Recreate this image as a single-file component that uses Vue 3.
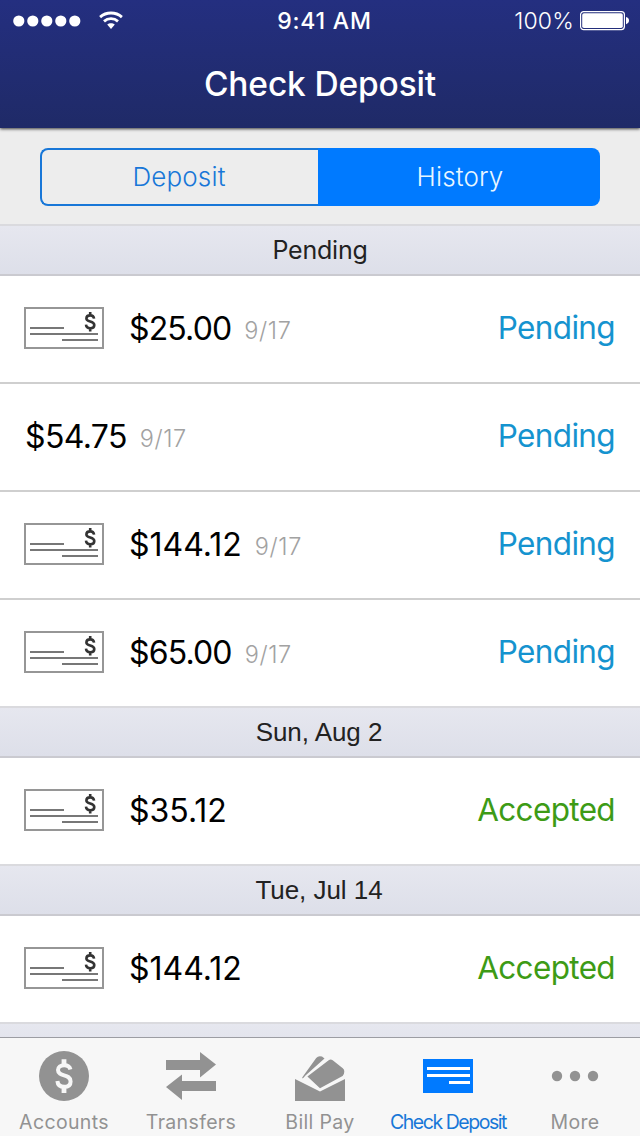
<script setup>
const sections = [
  {
    title: 'Pending',
    rows: [
      { check: true, amount: '$25.00', date: '9/17', status: 'Pending', snug: true },
      { check: false, amount: '$54.75', date: '9/17', status: 'Pending', snug: true },
      { check: true, amount: '$144.12', date: '9/17', status: 'Pending' },
      { check: true, amount: '$65.00', date: '9/17', status: 'Pending', snug: true },
    ],
  },
  { title: 'Sun, Aug 2', dated: true, rows: [{ check: true, amount: '$35.12', status: 'Accepted' }] },
  { title: 'Tue, Jul 14', dated: true, rows: [{ check: true, amount: '$144.12', status: 'Accepted' }] },
  { title: '', rows: [] },
]
</script>

<template>
  <div class="screen">
    <header class="top">
      <div class="status">
        <div class="signal">
          <svg class="dots" width="68" height="12" viewBox="0 0 68 12" fill="#fff">
            <circle v-for="n in 5" :key="n" :cx="n * 14 - 8.2" cy="6" r="5.6" />
          </svg>
          <svg width="24" height="19" viewBox="0 0 24 19" fill="none" stroke="#fff" stroke-width="2.8">
            <path d="M1.1 6.1C7.2 .6 16.8 .6 22.9 6.1" />
            <path d="M5 10.4C9 6.8 15 6.8 19 10.4" />
            <path d="M8.2 13.6C10.4 11.7 13.6 11.7 15.8 13.6L12 17.9Z" fill="#fff" stroke="none" />
          </svg>
        </div>
        <div class="time">9:41 AM</div>
        <div class="power">
          <span class="percent">100%</span>
          <svg width="50" height="20" viewBox="0 0 50 20" fill="#fff">
            <rect x=".6" y=".6" width="43.8" height="18" rx="3" fill="none" stroke="#fff" stroke-width="1.2" />
            <rect x="2.2" y="2.2" width="40.6" height="14.8" rx="1.8" />
            <path d="M46 6q3 .8 3 3.6t-3 3.6z" />
          </svg>
        </div>
      </div>
      <h1>Check Deposit</h1>
    </header>

    <div class="switcher">
      <div class="segments">
        <div class="segment"><span>Deposit</span></div>
        <div class="segment active"><span>History</span></div>
      </div>
    </div>

    <main>
      <section v-for="(s, i) in sections" :key="i">
        <h2 :class="{ dated: s.dated }"><span>{{ s.title }}</span></h2>
        <div v-for="(r, j) in s.rows" :key="j" class="row">
          <svg v-if="r.check" class="check" width="80" height="42" viewBox="0 0 80 42" fill="none">
            <rect x="1" y="1" width="78" height="40" stroke="#969696" stroke-width="2" />
            <path d="M6 21H40M6 27H74M38 33H74" stroke="#777" stroke-width="2" />
            <path d="M70.1 11.6C69.7 9.2 68.3 8.4 66.2 8.4C63.8 8.4 62.4 9.5 62.4 11.4C62.4 15.6 70.3 13.4 70.3 18C70.3 20.2 68.8 21.2 66.3 21.2C63.7 21.2 62.2 20 62 17.6M66.2 5V8.4M66.2 21.2V24.5" stroke="#333" stroke-width="2.6" />
          </svg>
          <span class="amount" :class="{ snug: r.snug, flush: !r.check }">{{ r.amount }}</span>
          <span v-if="r.date" class="date">{{ r.date }}</span>
          <span class="state" :class="r.status.toLowerCase()">{{ r.status }}</span>
        </div>
      </section>
    </main>

    <nav>
      <div class="tab accounts">
        <svg width="50" height="50" viewBox="0 0 50 50" fill="none">
          <circle cx="25" cy="25" r="25" fill="#929292" />
          <path d="M31.4 18.5C30.8 15.6 28.7 14.2 25.2 14.2C21.4 14.2 19 16 19 19C19 26.2 31.6 22.5 31.6 30.4C31.6 33.8 29.2 35.8 25.2 35.8C21.2 35.8 18.7 33.7 18.4 30" stroke="#f7f7f7" stroke-width="4" />
          <path d="M25 8.3V14M25 36V42" stroke="#f7f7f7" stroke-width="4.8" />
        </svg>
        <span>Accounts</span>
      </div>
      <div class="tab transfers">
        <svg width="50" height="50" viewBox="0 0 50 50" fill="#929292">
          <path d="M0 9H34V1L50 13.5L34 26.5V19H0Z" />
          <path d="M50 30H16V23.5L0 36L16 49V40H50Z" />
        </svg>
        <span>Transfers</span>
      </div>
      <div class="tab bills">
        <svg width="50" height="50" viewBox="0 0 50 50" fill="#929292">
          <path d="M0 28L25 40.5L50 28V50H0Z" />
          <path d="M12.4 25.4L33.7 9.2Q35.7 7.7 37.7 9.3L47.8 17.2Q49.5 18.6 49.3 20.8Q49.2 23.7 47.6 25L25 37.2Z" />
          <path d="M7.2 26.4L21.2 7Q23.5 4.2 27 5.6L29.5 7.6L10.2 24.8Q8.7 26.8 7.5 27.6Z" />
        </svg>
        <span>Bill Pay</span>
      </div>
      <div class="tab deposit">
        <svg width="50" height="50" viewBox="0 0 50 50">
          <rect y="8" width="50" height="34" fill="#007aff" />
          <path d="M4 17.4H47M4 24.4H47M26 31.4H47" stroke="#fff" stroke-width="3" />
        </svg>
        <span>Check Deposit</span>
      </div>
      <div class="tab more">
        <svg width="50" height="50" viewBox="0 0 50 50" fill="#929292">
          <circle cx="7" cy="25" r="5.2" /><circle cx="25" cy="25" r="5.2" /><circle cx="43" cy="25" r="5.2" />
        </svg>
        <span>More</span>
      </div>
    </nav>
  </div>
</template>

<style>
body { margin: 0; background: #fff; }
</style>

<style scoped>
* { box-sizing: border-box; }
.screen {
  width: 640px;
  height: 1136px;
  display: flex;
  flex-direction: column;
  overflow: hidden;
  background: #fff;
  font-family: Inter, "Liberation Sans", sans-serif;
  white-space: nowrap;
}
svg { display: block; flex: none; }
.top {
  flex: none;
  position: relative;
  height: 128px;
  color: #fff;
  background: linear-gradient(#242f80, #1f2a67);
  box-shadow: 0 1px 3px rgba(0, 0, 0, .75);
}
.status {
  display: grid;
  grid-template-columns: 1fr auto 1fr;
  height: 41px;
  align-items: center;
  padding: 0 10px 0 13px;
  font-size: 23px;
}
.signal { display: flex; align-items: center; gap: 18px; }
.time { font-weight: 500; letter-spacing: .8px; padding-left: 6px; }
.power { display: flex; justify-content: flex-end; align-items: center; gap: 6px; }
.percent { font-weight: 300; letter-spacing: .2px; }
h1 {
  margin: 0;
  line-height: 87px;
  text-align: center;
  font-size: 33.5px;
  font-weight: 500;
  letter-spacing: -.15px;
}
.switcher { flex: none; height: 96px; padding: 20px 40px; background: #ededed; }
.segments { height: 58px; display: grid; grid-template-columns: 278px 1fr; }
.segment {
  display: grid;
  place-items: center;
  border: 2px solid #1877d8;
  border-right: 0;
  border-radius: 8px 0 0 8px;
  font-size: 26px;
  font-weight: 350;
  line-height: 30px;
  padding: 0 2px 1px 0;
  color: #1877d8;
}
.segment span { letter-spacing: .15px; }
.segment.active {
  background: #007aff;
  border: 0;
  border-radius: 0 8px 8px 0;
  color: #e9f6ff;
  padding: 0 0 1px 2px;
}
main { flex: 1; min-height: 0; overflow: hidden; }
h2 {
  margin: 0;
  height: 52px;
  line-height: 48px;
  text-align: center;
  font-size: 25px;
  font-weight: 400;
  letter-spacing: -.2px;
  color: #222;
  background: linear-gradient(#e6e7ef, #dddfe9);
  border-top: 2px solid #dadade;
  border-bottom: 2px solid #cacad0;
}
h2.dated {
  font-family: "Liberation Sans", Arial, sans-serif;
  font-size: 26px;
  letter-spacing: -.05px;
  padding-right: 2px;
}
.row {
  height: 108px;
  padding: 0 25px 2px 24px;
  display: flex;
  align-items: center;
  border-bottom: 2px solid #cfcfcf;
}
.row:last-child { height: 106px; padding-bottom: 2px; border-bottom: 0; }
.check { margin-right: 25px; }
.amount { font-size: 32px; color: #000; }
.amount.snug { letter-spacing: -.85px; }
.amount.flush { margin-left: 1px; letter-spacing: -.65px; }
.date { margin: 5px 0 0 13px; font-size: 23.5px; font-weight: 325; letter-spacing: .6px; color: #a2a2a2; }
.state { margin: 0 0 1px auto; font-size: 31.5px; letter-spacing: -.65px; }
.pending { color: #1593cf; }
.accepted { color: #3d9b16; }
nav {
  flex: none;
  height: 99px;
  display: grid;
  grid-template-columns: repeat(5, 128px);
  border-top: 1px solid #9c9da3;
  background: #f7f7f7;
}
.tab { display: flex; flex-direction: column; align-items: center; padding-top: 13px; color: #929292; }
.tab span { margin-top: 9px; line-height: 24px; font-size: 19.5px; letter-spacing: .35px; }
.tab.transfers, .tab.more { padding-right: 2px; }
.tab.deposit { color: #1877d8; }
.tab.deposit span { letter-spacing: -1.45px; }
</style>
